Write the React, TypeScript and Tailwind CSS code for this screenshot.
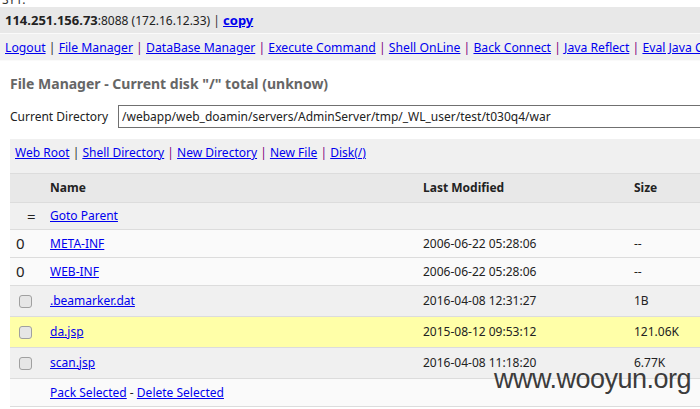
import React from 'react';

const font = { fontFamily: '"Noto Sans", "Open Sans", sans-serif' };

function Sep({ dark }: { dark?: boolean }) {
    return <span className={dark ? 'text-[#333]' : 'text-[#800080]'}>{'\u00a0|\u00a0'}</span>;
}

function A({ children }: { children: React.ReactNode }) {
    return <a href="#" className="text-[#0000ee] underline">{children}</a>;
}

function Checkbox() {
    return <span className="inline-block h-[13px] w-[13px] rounded-[3px] border border-[#a0a0a0] bg-[#e6e6e6] align-middle" />;
}

type Row = {
    icon: React.ReactNode;
    name: string;
    modified: string;
    size: string;
    bg: string;
    h: string;
};

const rows: Row[] = [
    { icon: <span className="pl-[8px] text-[15px]">=</span>, name: 'Goto Parent', modified: '', size: '', bg: 'bg-[#f0f0f0]', h: 'h-[27px]' },
    { icon: <span className="-ml-[3px] text-[15px]">0</span>, name: 'META-INF', modified: '2006-06-22 05:28:06', size: '--', bg: 'bg-[#fafafa]', h: 'h-[28px]' },
    { icon: <span className="-ml-[3px] text-[15px]">0</span>, name: 'WEB-INF', modified: '2006-06-22 05:28:06', size: '--', bg: 'bg-[#fafafa]', h: 'h-[28px]' },
    { icon: <Checkbox />, name: '.beamarker.dat', modified: '2016-04-08 12:31:27', size: '1B', bg: 'bg-[#f0f0f0]', h: 'h-[31px]' },
    { icon: <Checkbox />, name: 'da.jsp', modified: '2015-08-12 09:53:12', size: '121.06K', bg: 'bg-[#ffffa8]', h: 'h-[31px]' },
    { icon: <Checkbox />, name: 'scan.jsp', modified: '2016-04-08 11:18:20', size: '6.77K', bg: 'bg-[#f0f0f0]', h: 'h-[31px]' },
];

export default function App() {
    return (
        <div className="relative h-[409px] w-[700px] overflow-hidden bg-white text-[12px] text-[#222]" style={font}>
            {/* clipped line above */}
            <div className="h-[7px] overflow-hidden">
                <div className="-mt-[9px] pl-[2px] text-[12px] text-[#333]">SY1.</div>
            </div>

            {/* host bar */}
            <div className="h-[26px] whitespace-nowrap bg-[#e8e8e8] pl-[5px] text-[12px] leading-[26px] text-[#222]">
                <b className="text-[13px]">114.251.156.73</b>:8088 (172.16.12.33)<Sep dark /><a href="#" className="text-[13px] font-bold text-[#0000ee] underline">copy</a>
            </div>

            {/* nav */}
            <div className="h-[28px] whitespace-nowrap border-t border-b border-[#fafafa] bg-[#f0f0f0] pl-[5px] text-[12.2px] leading-[27px]">
                <A>Logout</A><Sep dark /><A>File Manager</A><Sep /><A>DataBase Manager</A><Sep /><A>Execute Command</A><Sep />
                <A>Shell OnLine</A><Sep /><A>Back Connect</A><Sep /><A>Java Reflect</A><Sep /><A>Eval Java Code</A>
            </div>

            <div className="pl-[10px]">
                <h2 className="mt-[13px] text-[14px] font-bold leading-[20px] text-[#666]">File Manager - Current disk "/" total (unknow)</h2>

                <div className="mt-[11px] flex items-center">
                    <span className="w-[108px] shrink-0 text-[12px] text-[#222]">Current Directory</span>
                    <input
                        readOnly
                        value="/webapp/web_doamin/servers/AdminServer/tmp/_WL_user/test/t030q4/war"
                        className="h-[23px] w-[620px] shrink-0 border border-[#707070] px-[3px] text-[12px] text-[#222] outline-none"
                        style={font}
                    />
                </div>

                <div className="mt-[11px] h-[34px] whitespace-nowrap bg-[#f0f0f0] pl-[5px] text-[12px] leading-[28px]">
                    <A>Web Root</A><Sep dark /><A>Shell Directory</A><Sep /><A>New Directory</A><Sep /><A>New File</A><Sep /><A>Disk(/)</A>
                </div>

                <table className="w-[720px] table-fixed border-collapse">
                    <colgroup>
                        <col className="w-[35px]" />
                        <col className="w-[373px]" />
                        <col className="w-[211px]" />
                        <col />
                    </colgroup>
                    <thead>
                        <tr className="h-[29px] border-t border-b border-[#dcdcdc] bg-[#e8e8e8] text-left">
                            <th />
                            <th className="pl-[5px] font-bold">Name</th>
                            <th className="pl-[5px] font-bold">Last Modified</th>
                            <th className="pl-[5px] font-bold">Size</th>
                        </tr>
                    </thead>
                    <tbody>
                        {rows.map((r) => (
                            <tr key={r.name} className={`${r.h} ${r.bg} border-b border-[#dcdcdc]`}>
                                <td className="pl-[9px] leading-none">{r.icon}</td>
                                <td className="pl-[5px]"><A>{r.name}</A></td>
                                <td className="pl-[5px]">{r.modified}</td>
                                <td className="pl-[5px]">{r.size}</td>
                            </tr>
                        ))}
                        <tr className="h-[28px] border-b border-[#dcdcdc] bg-[#fafafa]">
                            <td />
                            <td className="pl-[5px]" colSpan={3}><A>Pack Selected</A> - <A>Delete Selected</A></td>
                        </tr>
                    </tbody>
                </table>
            </div>

            {/* watermark */}
            <div
                className="pointer-events-none absolute left-[494px] top-[366px] text-[27px] leading-none tracking-[-0.5px] text-[#3c3c3c]"
                style={{ fontFamily: '"Liberation Sans", Arial, sans-serif' }}
            >
                www.wooyun.org
            </div>
        </div>
    );
}
